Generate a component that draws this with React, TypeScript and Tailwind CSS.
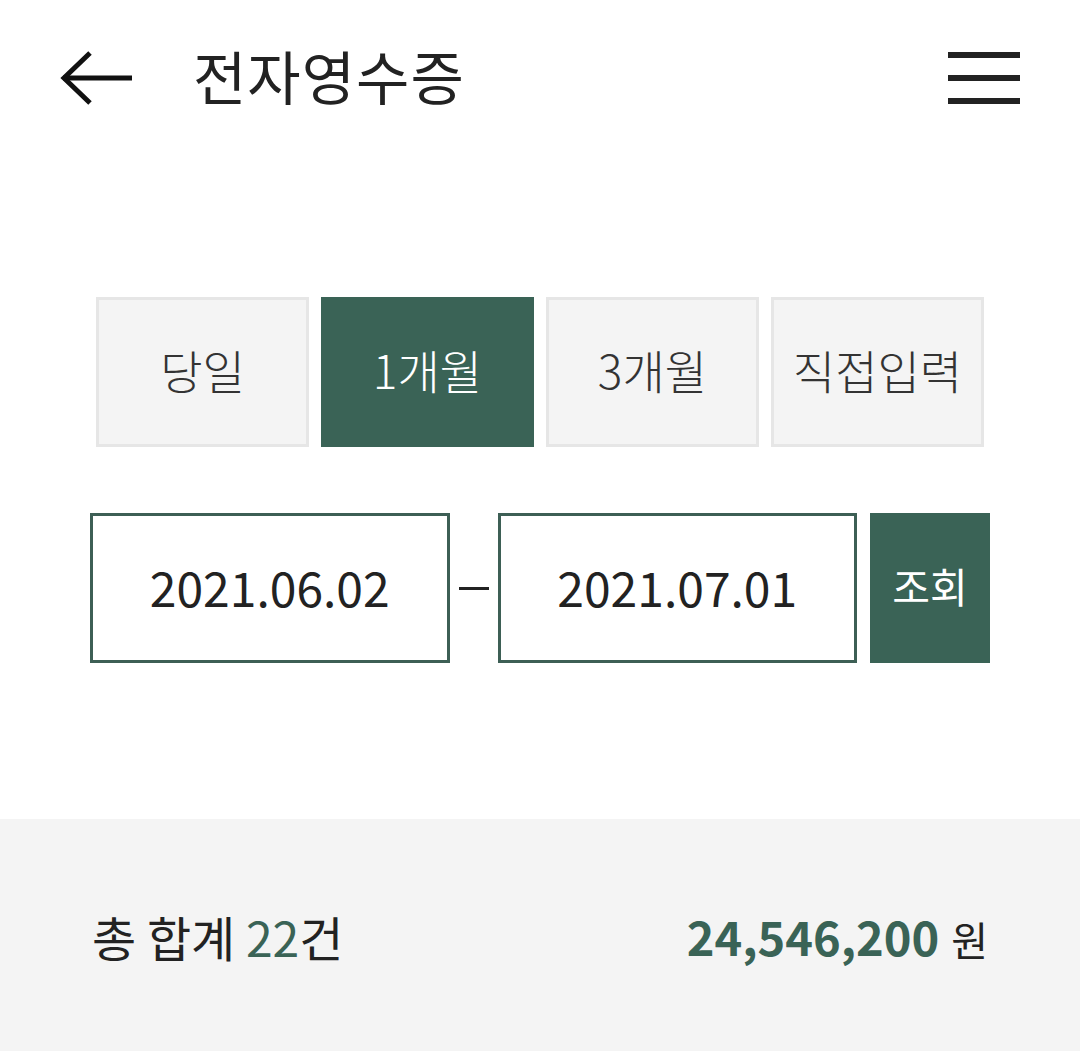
import React from "react";

const font = { fontFamily: '"Noto Sans CJK KR", "Noto Sans", sans-serif' };

export default function App() {
  const tabs = ["당일", "1개월", "3개월", "직접입력"];
  return (
    <div className="w-[1080px] bg-white text-[#222]" style={font}>
      <header className="h-[155px] flex items-center pl-[60px] pr-[60px]">
        <svg width="72" height="56" viewBox="0 0 72 56" fill="none" stroke="#111" strokeWidth="5" strokeLinecap="butt">
          <path d="M3 28 H72" />
          <path d="M30 3 L4 28 L30 53" />
        </svg>
        <h1 className="ml-[61px] -mt-[6px] text-[58px] leading-none tracking-[1px] text-[#222]">전자영수증</h1>
        <div className="ml-auto flex flex-col gap-[17px] w-[72px]">
          <span className="block h-[6px] bg-[#222]" />
          <span className="block h-[6px] bg-[#222]" />
          <span className="block h-[6px] bg-[#222]" />
        </div>
      </header>

      <div className="mt-[142px] px-[96px] grid grid-cols-4 gap-[12px]">
        {tabs.map((t, i) =>
          i === 1 ? (
            <div key={t} className="h-[150px] bg-[#3a6356] flex items-center justify-center text-white text-[46px] font-light">
              <span className="-mt-[6px]">{t}</span>
            </div>
          ) : (
            <div key={t} className="h-[150px] bg-[#f4f4f4] border-[3px] border-[#e6e6e6] flex items-center justify-center text-[#333] text-[46px] font-light">
              <span className="-mt-[6px]">{t}</span>
            </div>
          )
        )}
      </div>

      <div className="mt-[66px] px-[90px] flex items-stretch h-[150px]">
        <div className="flex-1 border-[3px] border-[#3d5f55] flex items-center justify-center text-[48px] text-[#222]">
          <span className="-mt-[4px]">2021.06.02</span>
        </div>
        <div className="w-[48px] flex items-center justify-center">
          <span className="block w-[30px] h-[3px] bg-[#222]" />
        </div>
        <div className="flex-1 border-[3px] border-[#3d5f55] flex items-center justify-center text-[48px] text-[#222]">
          <span className="-mt-[4px]">2021.07.01</span>
        </div>
        <div className="ml-[13px] w-[120px] bg-[#3a6356] flex items-center justify-center text-white text-[41px]">
          <span className="-mt-[4px]">조회</span>
        </div>
      </div>

      <div className="mt-[156px] h-[238px] bg-[#f4f4f4] px-[92px] flex items-center justify-between">
        <div className="text-[48px] text-[#222] -mt-[4px]">
          총 합계 <span className="text-[#3a6356]">22</span>건
        </div>
        <div className="flex items-baseline -mt-[4px]">
          <span className="text-[47px] font-bold text-[#3a6356]">24,546,200</span>
          <span className="ml-[12px] text-[40px] text-[#222]">원</span>
        </div>
      </div>
    </div>
  );
}
